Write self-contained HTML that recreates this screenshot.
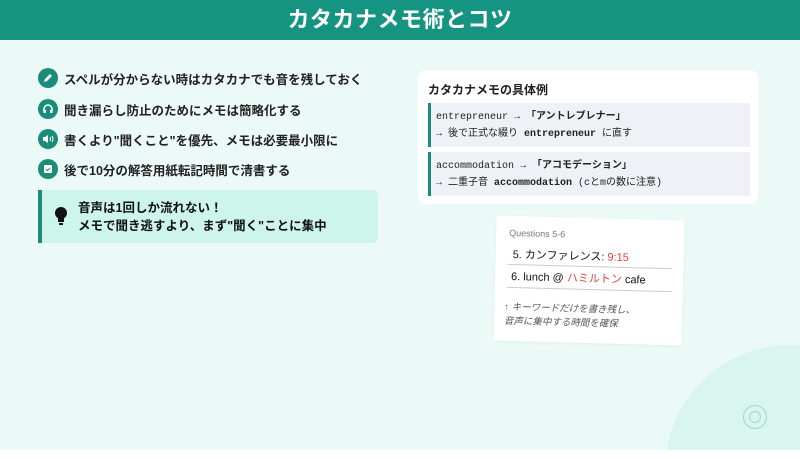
<!DOCTYPE html>
<html><head><meta charset="utf-8"><style>
*{margin:0;padding:0;box-sizing:border-box}
html,body{width:800px;height:458px;overflow:hidden}
body{background:#fff;font-family:"Liberation Sans","Noto Sans CJK JP",sans-serif;position:relative}
.wrap{position:absolute;left:0;top:0;width:800px;height:458px;overflow:hidden}
.bg{position:absolute;left:0;top:40px;width:800px;height:410px;background:#ecfaf7;overflow:hidden}
.blob{position:absolute;left:665px;top:305px;width:250px;height:250px;border-radius:50%;background:#d9f5ef}
.hdr{position:absolute;left:0;top:0;width:800px;height:40px;background:#169482;color:#fff;font-weight:bold;font-size:22px;text-align:center;line-height:40px;letter-spacing:0.5px}
.item{position:absolute;left:38px;display:flex;align-items:center;font-size:12.5px;font-weight:bold;color:#222}
.ic{width:20px;height:20px;border-radius:50%;background:#1a8c79;margin-right:6px;display:flex;align-items:center;justify-content:center}
.tip{position:absolute;left:38px;top:190px;width:340px;height:53px;background:#cdf5ea;border-left:4px solid #1a8c79;border-radius:0 6px 6px 0;font-size:12.5px;font-weight:bold;color:#111;padding:9px 0 0 36px;line-height:18px}
.card{position:absolute;left:418px;top:70px;width:340px;height:134px;background:#fff;border-radius:8px}
.card h3{position:absolute;left:10px;top:11px;font-size:12px;font-weight:bold;color:#222}
.ex{position:absolute;left:10px;width:322px;height:44px;background:#eef2f6;border-left:3px solid #1a8c79;font-family:"Liberation Mono","Noto Sans CJK JP",monospace;font-size:10px;color:#222;padding:6px 0 0 5px;line-height:17px}
.note{position:absolute;left:495px;top:218px;width:188px;height:125px;background:#fff;transform:rotate(1.5deg);box-shadow:0 1px 4px rgba(0,0,0,.05)}
.red{color:#e0403a}
</style></head><body><div class="wrap">
<div class="bg"><div class="blob"></div></div>
<div class="hdr">カタカナメモ術とコツ</div>
<div class="item" style="top:68px"><div class="ic"><svg width="12" height="12" viewBox="0 0 12 12"><path d="M2 10l1-3 5-5 2 2-5 5z" fill="#fff"/></svg></div>スペルが分からない時はカタカナでも音を残しておく</div>
<div class="item" style="top:99px"><div class="ic"><svg width="12" height="12" viewBox="0 0 12 12"><path d="M2 8V6a4 4 0 018 0v2" stroke="#fff" stroke-width="1.6" fill="none"/><rect x="1.5" y="7" width="2.5" height="3" fill="#fff"/><rect x="8" y="7" width="2.5" height="3" fill="#fff"/></svg></div>聞き漏らし防止のためにメモは簡略化する</div>
<div class="item" style="top:129px"><div class="ic"><svg width="12" height="12" viewBox="0 0 12 12"><path d="M1 4h2l3-2v8L3 8H1z" fill="#fff"/><path d="M8 4q1 2 0 4M10 3q2 3 0 6" stroke="#fff" stroke-width="1" fill="none"/></svg></div>書くより"聞くこと"を優先、メモは必要最小限に</div>
<div class="item" style="top:159px"><div class="ic"><svg width="12" height="12" viewBox="0 0 12 12"><rect x="2" y="2" width="8" height="8" rx="1" fill="#fff"/><path d="M4 6l1.5 1.5L8 5" stroke="#1a8c79" stroke-width="1" fill="none"/></svg></div>後で10分の解答用紙転記時間で清書する</div>
<div class="tip"><svg style="position:absolute;left:12px;top:16px" width="14" height="20" viewBox="0 0 14 20"><circle cx="7" cy="7" r="6" fill="#111"/><rect x="4" y="11" width="6" height="5" fill="#111"/><rect x="5" y="17" width="4" height="2" fill="#111"/></svg>音声は1回しか流れない！<br>メモで聞き逃すより、まず"聞く"ことに集中</div>
<div class="card"><h3>カタカナメモの具体例</h3>
<div class="ex" style="top:33px">entrepreneur → <b>「アントレプレナー」</b><br>→ 後で正式な綴り <b>entrepreneur</b> に直す</div>
<div class="ex" style="top:82px">accommodation → <b>「アコモデーション」</b><br>→ 二重子音 <b>accommodation</b> (cとmの数に注意)</div>
</div>
<div class="note">
<div style="position:absolute;left:13px;top:12px;font-size:9px;color:#777">Questions 5-6</div>
<div style="position:absolute;left:17px;top:30px;font-size:11px;color:#111">5. カンファレンス: <span class="red">9:15</span></div>
<div style="position:absolute;left:12px;top:48px;width:165px;border-top:1px solid #ccc"></div>
<div style="position:absolute;left:16px;top:52px;font-size:11px;color:#111">6. lunch @ <span class="red">ハミルトン</span> cafe</div>
<div style="position:absolute;left:12px;top:71px;width:165px;border-top:1px solid #ccc"></div>
<div style="position:absolute;left:10px;top:85px;font-size:9.5px;color:#555;font-style:italic;line-height:14px">↑ キーワードだけを書き残し、<br>音声に集中する時間を確保</div>
</div>
<div style="position:absolute;left:743px;top:405px;width:24px;height:24px;border-radius:50%;border:1.5px solid #9ed8cc"></div>
<div style="position:absolute;left:749px;top:411px;width:12px;height:12px;border-radius:50%;border:1.5px solid #9ed8cc"></div>
</div></body></html>
